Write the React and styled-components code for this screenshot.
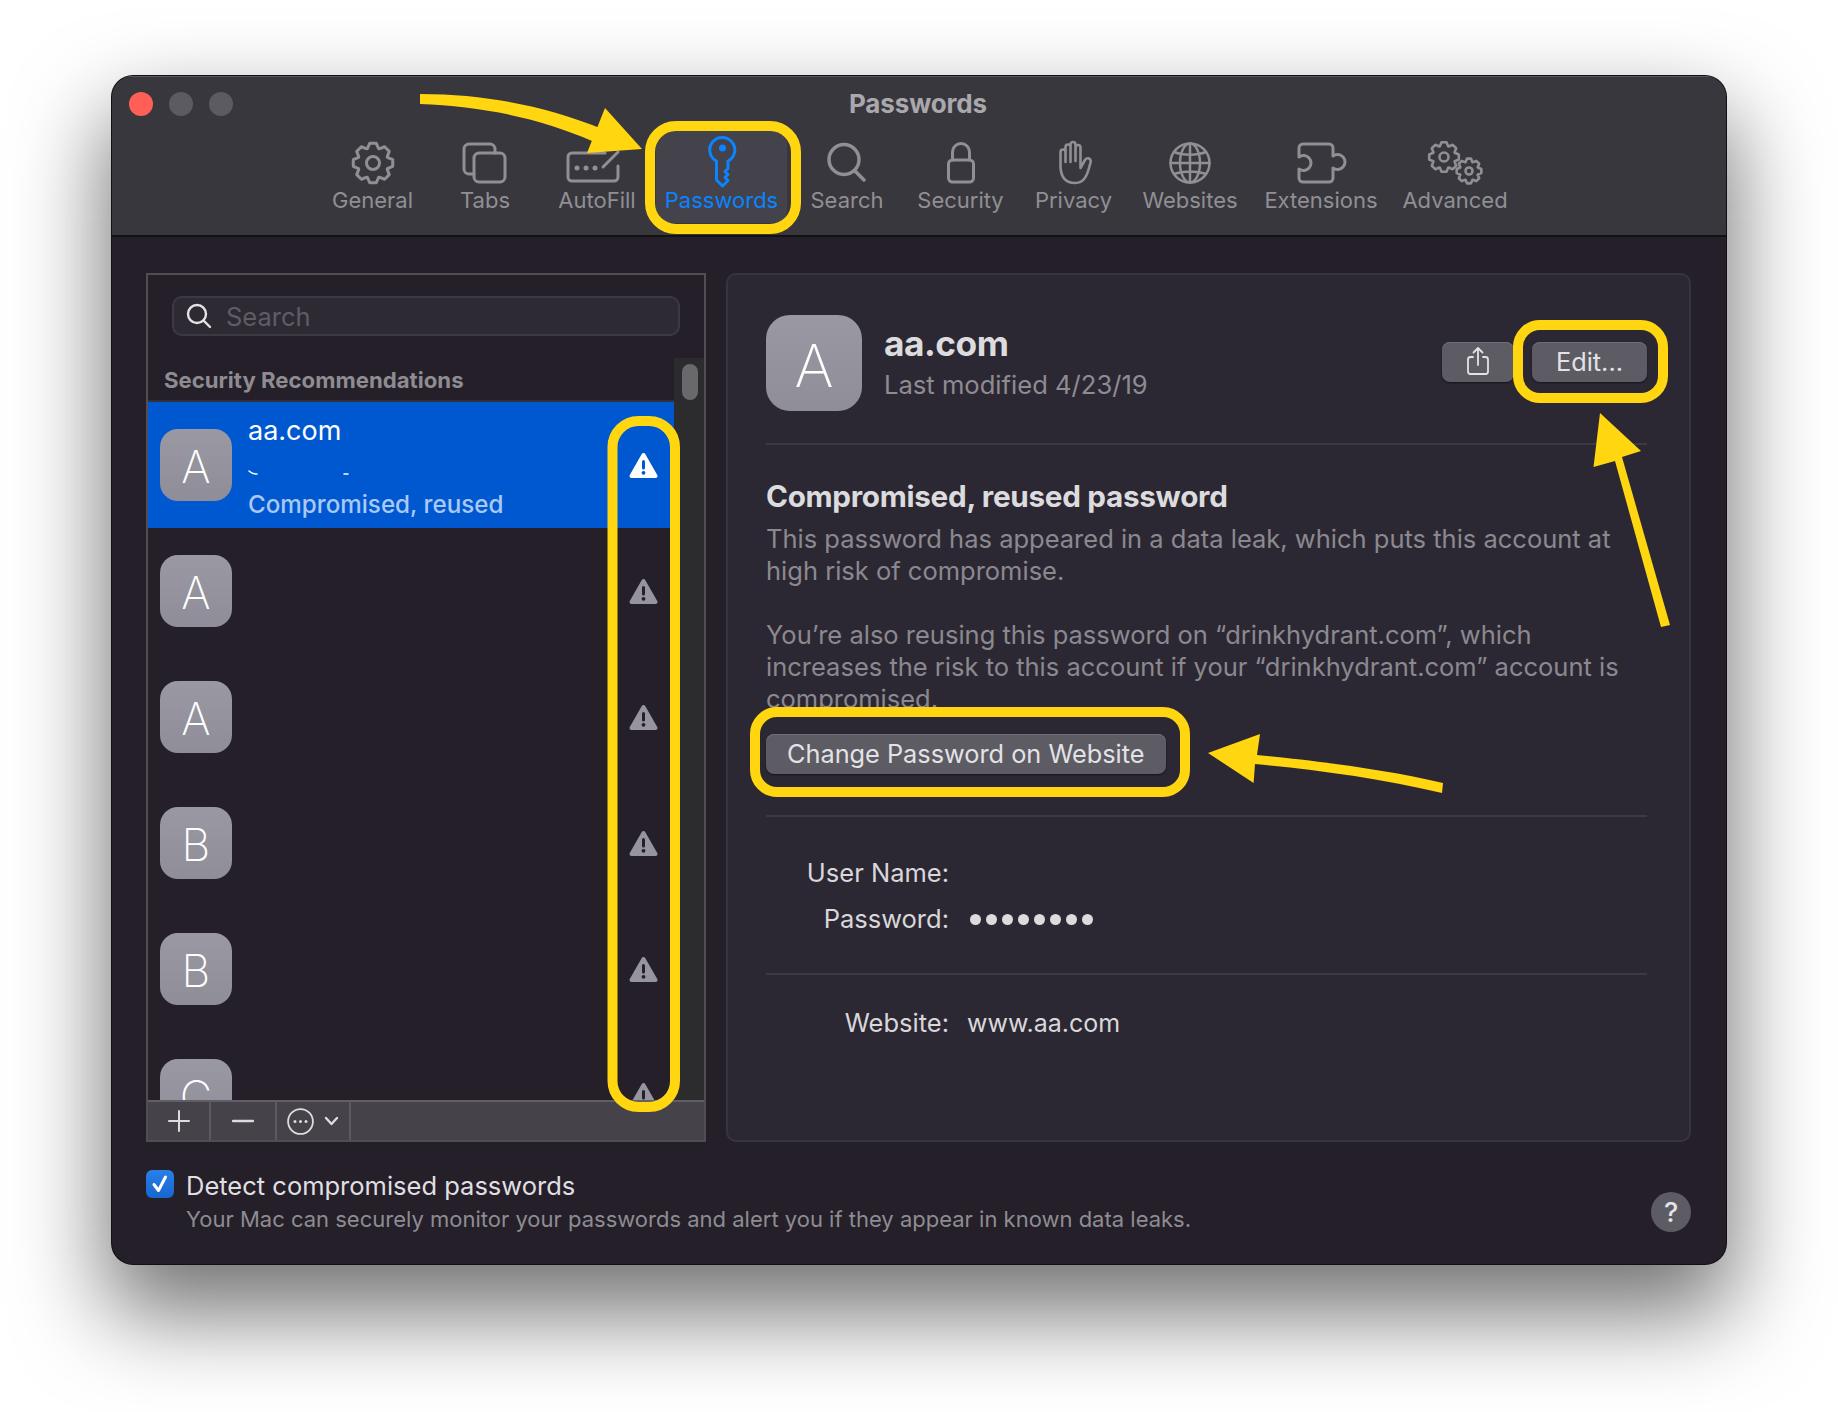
import React from 'react';
import styled, { createGlobalStyle } from 'styled-components';

const GlobalStyle = createGlobalStyle`
  html, body { margin: 0; padding: 0; background: #fff; }
  body { font-family: Inter, "Noto Sans", "Liberation Sans", sans-serif; -webkit-font-smoothing: antialiased; }
`;

const Page = styled.div`
  position: relative;
  width: 1838px;
  height: 1412px;
  padding: 76px 112px 0;
  box-sizing: border-box;
  overflow: hidden;
  background: #fff;
`;

const Window = styled.div`
  width: 1614px;
  height: 1188px;
  display: flex;
  flex-direction: column;
  border-radius: 21px;
  overflow: hidden;
  background: #241f29;
  box-shadow: 0 0 0 1px #111, 0 44px 90px 6px rgba(0, 0, 0, 0.55);
`;

const Toolbar = styled.div`
  height: 161px;
  flex: none;
  box-sizing: border-box;
  background: #39373e;
  border-bottom: 2px solid #121114;
  box-shadow: inset 0 1px 0 #5b5960;
`;

const TitleRow = styled.div`
  height: 55px;
  display: grid;
  grid-template-columns: 1fr auto 1fr;
  align-items: center;
  padding: 0 17px;
`;

const Lights = styled.div`
  display: flex;
  gap: 16px;
`;

const Light = styled.span`
  width: 24px;
  height: 24px;
  border-radius: 50%;
  background: ${p => p.$c};
`;

const Title = styled.div`
  font-size: 26px;
  font-weight: 700;
  letter-spacing: -0.15px;
  color: #a9a8ac;
  margin-left: -2px;
`;

const Tools = styled.div`
  display: flex;
  padding-left: 201px;
`;

const Tool = styled.div`
  width: ${p => p.$w}px;
  height: 92px;
  box-sizing: border-box;
  padding-top: 8px;
  display: flex;
  flex-direction: column;
  align-items: center;
  border-radius: 12px;
  color: ${p => (p.$active ? '#0a84ff' : '#908f94')};
  background: ${p => (p.$active ? '#44424a' : 'transparent')};

  svg { display: block; overflow: visible; }
`;

const ToolLabel = styled.span`
  font-size: 22px;
  line-height: 26px;
  white-space: nowrap;
`;

const Content = styled.div`
  flex: none;
  display: flex;
  gap: 20px;
  padding: 36px 35px 0 34px;
`;

const ListPanel = styled.div`
  width: 560px;
  height: 869px;
  box-sizing: border-box;
  border: 2px solid #504d55;
  display: flex;
  flex-direction: column;
`;

const SearchField = styled.div`
  margin: 21px 24px 22px;
  height: 40px;
  flex: none;
  box-sizing: border-box;
  display: flex;
  align-items: center;
  gap: 14px;
  padding-left: 12px;
  background: #2e2a34;
  border: 2px solid #3d3943;
  border-radius: 10px;
  color: #5f5c64;
  font-size: 25.5px;
`;

const ListBody = styled.div`
  flex: 1;
  display: flex;
  min-height: 0;
`;

const ListColumn = styled.div`
  flex: 1;
  min-width: 0;
  overflow: hidden;
`;

const SectionHead = styled.div`
  height: 44px;
  box-sizing: border-box;
  padding: 8px 0 0 16px;
  font-size: 22.2px;
  font-weight: 700;
  line-height: 28px;
  color: #8e8c91;
  border-bottom: 2px solid #33303a;
`;

const Row = styled.div`
  height: 126px;
  box-sizing: border-box;
  display: flex;
  align-items: center;
  gap: 16px;
  padding: 0 16px 0 12px;
  background: ${p => (p.$selected ? '#0058d0' : 'transparent')};
`;

const Avatar = styled.div`
  width: ${p => p.$size}px;
  height: ${p => p.$size}px;
  flex: none;
  display: flex;
  align-items: center;
  justify-content: center;
  padding-top: 4px;
  box-sizing: border-box;
  border-radius: ${p => p.$size / 4}px;
  background: linear-gradient(#9a99a3, #8f8e98);
  color: #fff;
  font-weight: 250;
  font-size: ${p => p.$size * 0.62}px;
`;

const RowText = styled.div`
  flex: 1;
  align-self: stretch;
  padding-top: 11px;
  display: flex;
  flex-direction: column;
  line-height: 35.5px;
`;

const RowName = styled.span`
  color: #fff;
  font-size: 27px;
`;

const RowSlot = styled.span`
  height: 35.5px;
  display: flex;
  align-items: center;
  padding-top: 14px;
  box-sizing: border-box;
`;

const RowSliver = styled(RowSlot)`
  margin-top: 36px;
`;

const RowStatus = styled.span`
  margin-top: 2.5px;
  color: #a9c9f5;
  font-size: 24.2px;
  font-weight: 500;
`;

const ScrollTrack = styled.div`
  width: 30px;
  flex: none;
  background: #2c2b2d;
  padding: 6px 6px 0 8px;
  box-sizing: border-box;
`;

const ScrollThumb = styled.div`
  height: 36px;
  border-radius: 8px;
  background: #69686c;
`;

const BottomBar = styled.div`
  height: 40px;
  flex: none;
  box-sizing: border-box;
  display: flex;
  background: #45424a;
  border-top: 2px solid #615e66;
`;

const BarCell = styled.div`
  width: ${p => p.$w}px;
  box-sizing: border-box;
  display: flex;
  align-items: center;
  justify-content: center;
  gap: 10px;
  border-right: 2px solid #5c5961;
`;

const DetailPanel = styled.div`
  flex: 1;
  height: 869px;
  box-sizing: border-box;
  padding: 40px 42px 0 38px;
  background: #2c2833;
  border: 2px solid #38343e;
  border-radius: 10px;
`;

const DetailHead = styled.div`
  display: flex;
  align-items: center;
  gap: 22px;
`;

const HeadText = styled.div`
  flex: 1;
  display: flex;
  flex-direction: column;
  gap: 5px;
  margin-top: -2px;
`;

const SiteName = styled.div`
  font-size: 35.3px;
  line-height: 40px;
  font-weight: 700;
  letter-spacing: -0.5px;
  color: #dcdbde;
`;

const Modified = styled.div`
  font-size: 25.6px;
  line-height: 32px;
  color: #8e8c91;
`;

const HeadButtons = styled.div`
  display: flex;
  gap: 18px;
  margin-top: -2px;
`;

const Button = styled.div`
  height: 40px;
  box-sizing: border-box;
  width: ${p => (p.$w ? `${p.$w}px` : 'auto')};
  display: inline-flex;
  align-items: center;
  justify-content: center;
  padding: 0 ${p => (p.$w ? 0 : 21)}px 2px;
  margin-top: ${p => p.$top || 0}px;
  border-radius: 8px;
  background: #5d5b63;
  color: #e3e2e5;
  font-size: 25.3px;
  box-shadow: inset 0 1px 0 #6f6d75, 0 1px 2px rgba(0, 0, 0, 0.5);
`;

const Rule = styled.div`
  height: 2px;
  background: #3d3943;
  margin-top: ${p => p.$top}px;
`;

const Heading = styled.div`
  margin-top: 33px;
  font-size: 29.7px;
  line-height: 36px;
  font-weight: 700;
  letter-spacing: -0.3px;
  color: #dcdbde;
`;

const Para = styled.p`
  margin: ${p => p.$top}px 0 0;
  font-size: 25.5px;
  line-height: 32px;
  white-space: nowrap;
  color: #8b898f;
`;

const Fields = styled.div`
  margin-top: ${p => p.$top}px;
  display: grid;
  grid-template-columns: 183px 1fr;
  column-gap: 18px;
  row-gap: 14px;
  font-size: 25px;
  line-height: 32px;
  color: #d8d7da;
`;

const FieldLabel = styled.span`
  text-align: right;
  font-size: 25.5px;
`;

const Dots = styled.span`
  display: flex;
  align-items: center;
  gap: 5px;
  padding-left: 3px;
`;

const Dot = styled.i`
  width: 11px;
  height: 11px;
  border-radius: 50%;
  background: #dcdbde;
`;

const Footer = styled.div`
  flex: 1;
  display: flex;
  align-items: flex-start;
  padding: 28px 35px 0 34px;
`;

const Checkbox = styled.div`
  width: 28px;
  height: 28px;
  flex: none;
  display: flex;
  align-items: center;
  justify-content: center;
  border-radius: 6px;
  background: linear-gradient(#2a7fe8, #1766cf);
`;

const FooterText = styled.div`
  flex: 1;
  margin-left: 12px;
`;

const CheckLabel = styled.div`
  font-size: 25.5px;
  line-height: 32px;
  color: #e0dfe2;
`;

const CheckHint = styled.div`
  margin-top: 2px;
  font-size: 22px;
  line-height: 30px;
  color: #8e8c91;
`;

const Help = styled.div`
  width: 40px;
  height: 40px;
  flex: none;
  margin-top: 22px;
  display: flex;
  align-items: center;
  justify-content: center;
  border-radius: 50%;
  background: #5d5b63;
  color: #e3e2e5;
  font-size: 27px;
  font-weight: 500;
`;

const Annotations = styled.svg`
  position: absolute;
  left: 0;
  top: 0;
  pointer-events: none;
`;

// trapezoid teeth, the stroke's round joins soften them
const gearPath = (cx, cy, R, r, n) => {
  const pts = [];
  for (let i = 0; i < n; i++) {
    const a = (i / n) * Math.PI * 2 - Math.PI / 2;
    const s = Math.PI / n;
    [[r, -s * 0.95], [R, -s * 0.42], [R, s * 0.42], [r, s * 0.95]].forEach(([rad, d]) => {
      pts.push(`${(cx + rad * Math.cos(a + d)).toFixed(2)} ${(cy + rad * Math.sin(a + d)).toFixed(2)}`);
    });
  }
  return `M${pts.join('L')}Z`;
};

const ToolIcon = ({ children, width = 3 }) => (
  <svg width="60" height="48" viewBox="0 0 60 48" fill="none" stroke="currentColor" strokeWidth={width} strokeLinecap="round" strokeLinejoin="round">
    {children}
  </svg>
);

const tools = [
  {
    label: 'General', w: 119,
    icon: <ToolIcon><path d={gearPath(30, 24, 20, 15.5, 8)} /><circle cx="30" cy="24" r="6.5" /></ToolIcon>,
  },
  {
    label: 'Tabs', w: 106,
    icon: (
      <ToolIcon>
        <path d="M19 35h-5a5 5 0 0 1-5-5V10a5 5 0 0 1 5-5h21a5 5 0 0 1 5 5v4" />
        <rect x="19" y="14" width="31" height="29" rx="5" />
      </ToolIcon>
    ),
  },
  {
    label: 'AutoFill', w: 118,
    icon: (
      <ToolIcon>
        <path d="M51 27v11a4 4 0 0 1-4 4H5a4 4 0 0 1-4-4V18a4 4 0 0 1 4-4h33" />
        <path d="M36 28l15-15" />
        <circle cx="10" cy="29" r="2.5" fill="currentColor" stroke="none" />
        <circle cx="19" cy="29" r="2.5" fill="currentColor" stroke="none" />
        <circle cx="28" cy="29" r="2.5" fill="currentColor" stroke="none" />
      </ToolIcon>
    ),
  },
  {
    label: 'Passwords', w: 131, active: true,
    icon: (
      <ToolIcon>
        <path d="M24.5 22v19l6 6 5.5-5.5-3-3 3-3-3-3 3-3V22a12.5 12.5 0 1 0-11.5 0z" />
        <circle cx="30.5" cy="9" r="3.5" fill="currentColor" stroke="none" />
      </ToolIcon>
    ),
  },
  {
    label: 'Search', w: 120,
    icon: <ToolIcon width={3.5}><circle cx="27" cy="20.5" r="15" /><path d="M38 32l9 9" /></ToolIcon>,
  },
  {
    label: 'Security', w: 107,
    icon: (
      <ToolIcon>
        <rect x="17.5" y="21" width="25" height="22" rx="4" />
        <path d="M21.5 21v-8a8.5 8.5 0 0 1 17 0v8" />
      </ToolIcon>
    ),
  },
  {
    label: 'Privacy', w: 119,
    icon: (
      <ToolIcon width={2.6}>
        <path d="M21.5 23V8a2.5 2.5 0 0 1 5 0v15M26.5 21V5.5a2.5 2.5 0 0 1 5 0V21M31.5 22V8.5a2.5 2.5 0 0 1 5 0V29l4.5-8a3 3 0 0 1 5.5 2.5C44 33 42 44 31 44 21 44 17 38 16.5 28V13a2.5 2.5 0 0 1 5 0" />
      </ToolIcon>
    ),
  },
  {
    label: 'Websites', w: 114,
    icon: (
      <ToolIcon width={2.5}>
        <circle cx="30" cy="24" r="19.5" />
        <ellipse cx="30" cy="24" rx="10" ry="19.5" />
        <path d="M30 4.5v39M10.5 24h39M14 13c9 3.5 23 3.5 32 0M14 35c9-3.5 23-3.5 32 0" />
      </ToolIcon>
    ),
  },
  {
    label: 'Extensions', w: 148,
    icon: (
      <ToolIcon>
        <path d="M12 5h26a4 4 0 0 1 4 4v8a7.5 7.5 0 1 1 0 12v10a4 4 0 0 1-4 4H12a4 4 0 0 1-4-4v-9A7.5 7.5 0 1 0 8 18V9a4 4 0 0 1 4-4z" />
      </ToolIcon>
    ),
  },
  {
    label: 'Advanced', w: 120,
    icon: (
      <ToolIcon width={2.6}>
        <path d={gearPath(19, 18, 15, 11.5, 8)} />
        <circle cx="19" cy="18" r="4.5" />
        <path d={gearPath(44, 32, 12.5, 9.5, 8)} />
        <circle cx="44" cy="32" r="3.5" />
      </ToolIcon>
    ),
  },
];

const WarningIcon = ({ color, mark }) => (
  <svg width="29" height="27" viewBox="0 0 29 27" style={{ flex: 'none' }}>
    <path d="M14.5 3L26.5 24H2.5z" fill={color} stroke={color} strokeWidth="4" strokeLinejoin="round" />
    <rect x="13" y="8" width="3" height="9.5" rx="1.5" fill={mark} />
    <circle cx="14.5" cy="20.8" r="1.9" fill={mark} />
  </svg>
);

const rows = [
  { letter: 'A', selected: true },
  { letter: 'A' },
  { letter: 'A' },
  { letter: 'B' },
  { letter: 'B' },
  { letter: 'C', sliver: true },
];

const App = () => (
  <Page>
    <GlobalStyle />
    <Window>
      <Toolbar>
        <TitleRow>
          <Lights>
            <Light $c="#ff5f57" />
            <Light $c="#5d5b62" />
            <Light $c="#5d5b62" />
          </Lights>
          <Title>Passwords</Title>
        </TitleRow>
        <Tools>
          {tools.map(t => (
            <Tool key={t.label} $w={t.w} $active={t.active}>
              {t.icon}
              <ToolLabel>{t.label}</ToolLabel>
            </Tool>
          ))}
        </Tools>
      </Toolbar>

      <Content>
        <ListPanel>
          <SearchField>
            <svg width="26" height="26" viewBox="0 0 26 26" fill="none" stroke="#e4e3e6" strokeWidth="2.4" strokeLinecap="round">
              <circle cx="11" cy="11" r="9" />
              <path d="M17.5 17.5l6.5 6.5" />
            </svg>
            Search
          </SearchField>
          <ListBody>
            <ListColumn>
              <SectionHead>Security Recommendations</SectionHead>
              {rows.map((r, i) => (
                <Row key={i} $selected={r.selected}>
                  <Avatar $size={72}>{r.letter}</Avatar>
                  <RowText>
                    {r.selected && <RowName>aa.com</RowName>}
                    {r.selected && (
                      <RowSlot>
                        <svg width="110" height="6" viewBox="0 0 110 6" fill="none" stroke="#fff" strokeWidth="1.5" strokeLinecap="round">
                          <path d="M1 1c2 2 5 3 8 3M96 4h4" />
                        </svg>
                      </RowSlot>
                    )}
                    {r.selected && <RowStatus>Compromised, reused</RowStatus>}
                    {r.sliver && (
                      <RowSliver>
                        <svg width="10" height="8" viewBox="0 0 10 8">
                          <path d="M1 0l7 7H1z" fill="#77757c" />
                        </svg>
                      </RowSliver>
                    )}
                  </RowText>
                  <WarningIcon
                    color={r.selected ? '#fff' : '#96959e'}
                    mark={r.selected ? '#0058d0' : '#241f29'}
                  />
                </Row>
              ))}
            </ListColumn>
            <ScrollTrack>
              <ScrollThumb />
            </ScrollTrack>
          </ListBody>
          <BottomBar>
            <BarCell $w={63}>
              <svg width="22" height="22" viewBox="0 0 22 22" stroke="#dcdbde" strokeWidth="2" strokeLinecap="round">
                <path d="M11 1v20M1 11h20" />
              </svg>
            </BarCell>
            <BarCell $w={66}>
              <svg width="22" height="4" viewBox="0 0 22 4" stroke="#dcdbde" strokeWidth="2.4" strokeLinecap="round">
                <path d="M1 2h20" />
              </svg>
            </BarCell>
            <BarCell $w={74}>
              <svg width="27" height="27" viewBox="0 0 27 27" fill="none" stroke="#dcdbde" strokeWidth="1.8">
                <circle cx="13.5" cy="13.5" r="12.4" />
                <circle cx="8" cy="13.5" r="1.5" fill="#dcdbde" stroke="none" />
                <circle cx="13.5" cy="13.5" r="1.5" fill="#dcdbde" stroke="none" />
                <circle cx="19" cy="13.5" r="1.5" fill="#dcdbde" stroke="none" />
              </svg>
              <svg width="15" height="10" viewBox="0 0 15 10" fill="none" stroke="#dcdbde" strokeWidth="2.4" strokeLinecap="round" strokeLinejoin="round">
                <path d="M2 2l5.5 6L13 2" />
              </svg>
            </BarCell>
          </BottomBar>
        </ListPanel>

        <DetailPanel>
          <DetailHead>
            <Avatar $size={96}>A</Avatar>
            <HeadText>
              <SiteName>aa.com</SiteName>
              <Modified>Last modified 4/23/19</Modified>
            </HeadText>
            <HeadButtons>
              <Button $w={72}>
                <svg width="24" height="30" viewBox="0 0 24 30" fill="none" stroke="#e3e2e5" strokeWidth="1.8" strokeLinecap="round" strokeLinejoin="round">
                  <path d="M7 11H4.5A2.5 2.5 0 0 0 2 13.5v12A2.5 2.5 0 0 0 4.5 28h15a2.5 2.5 0 0 0 2.5-2.5v-12a2.5 2.5 0 0 0-2.5-2.5H17" />
                  <path d="M12 19V2M7.5 6.5L12 2l4.5 4.5" />
                </svg>
              </Button>
              <Button $w={115}>Edit...</Button>
            </HeadButtons>
          </DetailHead>
          <Rule $top={32} />
          <Heading>Compromised, reused password</Heading>
          <Para $top={9}>
            This password has appeared in a data leak, which puts this account at
            <br />
            high risk of compromise.
          </Para>
          <Para $top={32}>
            You’re also reusing this password on “drinkhydrant.com”, which
            <br />
            increases the risk to this account if your “drinkhydrant.com” account is
            <br />
            compromised.
          </Para>
          <Button $top={19}>Change Password on Website</Button>
          <Rule $top={41} />
          <Fields $top={40}>
            <FieldLabel>User Name:</FieldLabel>
            <span />
            <FieldLabel>Password:</FieldLabel>
            <Dots>
              {Array.from({ length: 8 }).map((_, i) => (
                <Dot key={i} />
              ))}
            </Dots>
          </Fields>
          <Rule $top={38} />
          <Fields $top={32}>
            <FieldLabel>Website:</FieldLabel>
            <span>www.aa.com</span>
          </Fields>
        </DetailPanel>
      </Content>

      <Footer>
        <Checkbox>
          <svg width="20" height="20" viewBox="0 0 20 20" fill="none" stroke="#fff" strokeWidth="3" strokeLinecap="round" strokeLinejoin="round">
            <path d="M4 10.5l4.5 6L15.5 3" />
          </svg>
        </Checkbox>
        <FooterText>
          <CheckLabel>Detect compromised passwords</CheckLabel>
          <CheckHint>Your Mac can securely monitor your passwords and alert you if they appear in known data leaks.</CheckHint>
        </FooterText>
        <Help>?</Help>
      </Footer>
    </Window>

    <Annotations width="1838" height="1412" viewBox="0 0 1838 1412">
      <g fill="none" stroke="#ffd60f" strokeWidth="10">
        <rect x="650" y="126" width="146" height="103" rx="26" />
        <rect x="1518" y="325" width="145" height="73" rx="22" />
        <rect x="755" y="712" width="430" height="80" rx="22" />
        <rect x="612.5" y="421" width="62.5" height="686" rx="26" />
      </g>
      <g fill="#ffd60f">
        <path d="M420 94C490 94 550 108 600 128L592 141C540 118 480 106 420 104Z" />
        <path d="M605 108L642 149L587 153Z" />
        <path d="M1600 413L1641 451L1622 457L1670 625L1661 627L1615 461L1593.5 467Z" />
        <path d="M1208 753L1260 734L1257 755C1300 759 1380 768 1443 783L1442 793C1380 778 1310 769 1255 764L1253.6 783Z" />
      </g>
    </Annotations>
  </Page>
);

export default App;
